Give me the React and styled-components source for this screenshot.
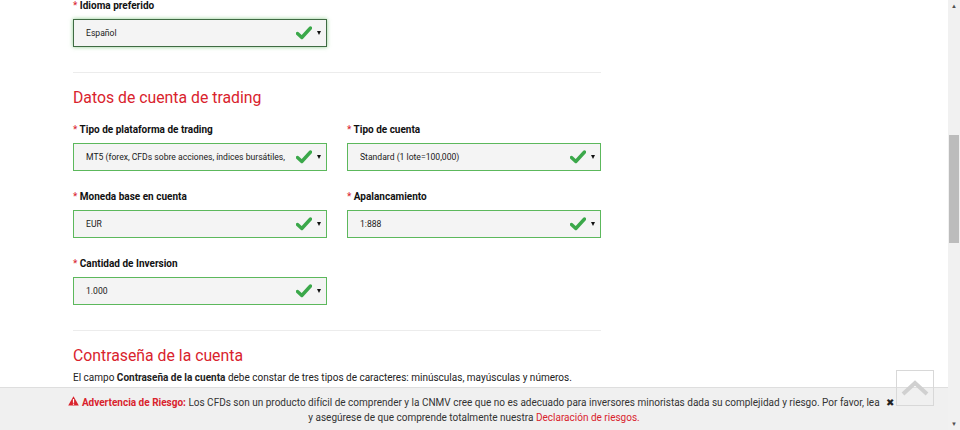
import styled, { createGlobalStyle } from 'styled-components';

const GlobalStyle = createGlobalStyle`
  html, body {
    margin: 0;
    padding: 0;
    background: #fff;
    overflow: hidden;
  }
  body {
    font-family: Roboto, 'Liberation Sans', Arial, sans-serif;
    color: #222;
  }
`;

const CheckIcon = () => (
  <svg width="16" height="14" viewBox="0 0 16 14">
    <path
      d="M1.5 7.5 L5.8 11.5 L14.5 2"
      fill="none"
      stroke="#3ba84a"
      strokeWidth="3.4"
      strokeLinecap="round"
      strokeLinejoin="round"
    />
  </svg>
);

const WarnIcon = () => (
  <svg width="11" height="10" viewBox="0 0 11 10">
    <path d="M5.5 0.3 L10.8 9.6 L0.2 9.6 Z" fill="#d9232d" />
    <rect x="4.9" y="3" width="1.2" height="3.8" fill="#fff" />
    <rect x="4.9" y="7.6" width="1.2" height="1.2" fill="#fff" />
  </svg>
);

const Field = ({ label, value, focused }) => (
  <FieldBlock>
    <Label>
      <Star>*</Star> {label}
    </Label>
    <Select $focused={focused}>
      <SelectValue>{value}</SelectValue>
      <CheckIcon />
      <Caret />
    </Select>
  </FieldBlock>
);

const App = () => (
  <>
    <GlobalStyle />
    <Page>
      <Main>
        <Content>
          <Grid>
            <Field label="Idioma preferido" value="Español" focused />
          </Grid>
          <Divider />
          <Title>Datos de cuenta de trading</Title>
          <Grid>
            <Field
              label="Tipo de plataforma de trading"
              value="MT5 (forex, CFDs sobre acciones, índices bursátiles,"
            />
            <Field label="Tipo de cuenta" value="Standard (1 lote=100,000)" />
            <Field label="Moneda base en cuenta" value="EUR" />
            <Field label="Apalancamiento" value="1:888" />
            <Field label="Cantidad de Inversion" value="1.000" />
          </Grid>
          <Divider />
          <Title>Contraseña de la cuenta</Title>
          <Paragraph>
            El campo <b>Contraseña de la cuenta</b> debe constar de tres tipos
            de caracteres: minúsculas, mayúsculas y números.
          </Paragraph>
        </Content>
        <RiskBar>
          <RiskText>
            <WarnIcon /> <RiskLabel>Advertencia de Riesgo:</RiskLabel> Los
            CFDs son un producto difícil de comprender y la CNMV cree que no es
            adecuado para inversores minoristas dada su complejidad y riesgo.
            Por favor, lea y asegúrese de que comprende totalmente nuestra{' '}
            <RiskLink>Declaración de riesgos.</RiskLink>
          </RiskText>
          <Close>✖</Close>
        </RiskBar>
        <TopButton>
          <svg width="28" height="16" viewBox="0 0 28 16">
            <path
              d="M2 14 L14 3 L26 14"
              fill="none"
              stroke="#d0d0d0"
              strokeWidth="4"
            />
          </svg>
        </TopButton>
      </Main>
      <Scrollbar>
        <ScrollArrow>▲</ScrollArrow>
        <Track>
          <Thumb />
        </Track>
        <ScrollArrow>▼</ScrollArrow>
      </Scrollbar>
    </Page>
  </>
);

export default App;

const Page = styled.div`
  display: flex;
  width: 960px;
  height: 430px;
  overflow: hidden;
`;

const Main = styled.div`
  position: relative;
  flex: 1;
  display: flex;
  flex-direction: column;
  overflow: hidden;
`;

const Content = styled.div`
  flex: 1;
  width: 528px;
  padding-left: 73px;
  overflow: hidden;
`;

const Grid = styled.div`
  display: grid;
  grid-template-columns: 254px 254px;
  column-gap: 20px;
  row-gap: 19px;
  margin-top: -1px;
`;

const FieldBlock = styled.div`
  display: flex;
  flex-direction: column;
  gap: 6px;
`;

const Label = styled.div`
  font-size: 10px;
  line-height: 14px;
  font-weight: 700;
  color: #111;
`;

const Star = styled.span`
  color: #d9232d;
  font-weight: 400;
`;

const Select = styled.div`
  box-sizing: border-box;
  height: 28px;
  display: flex;
  align-items: center;
  gap: 5px;
  padding: 0 5px 0 12px;
  background: #f4f4f4;
  border: 1px solid ${(p) => (p.$focused ? '#3f6b43' : '#5cb85c')};
  box-shadow: ${(p) => (p.$focused ? '0 0 4px rgba(92, 184, 92, 0.7)' : 'none')};
`;

const SelectValue = styled.span`
  flex: 1;
  font-size: 8.6px;
  color: #1a1a1a;
  white-space: nowrap;
  overflow: hidden;
`;

const Caret = styled.span`
  width: 0;
  height: 0;
  border-left: 2.5px solid transparent;
  border-right: 2.5px solid transparent;
  border-top: 4px solid #111;
`;

const Divider = styled.hr`
  border: 0;
  border-top: 1px solid #ececec;
  margin: 25px 0 15px;
`;

const Title = styled.h2`
  margin: 0 0 16px;
  font-size: 15.8px;
  line-height: 20px;
  font-weight: 400;
  color: #d9232d;
`;

const Paragraph = styled.p`
  margin: -11px 0 0;
  font-size: 10px;
  line-height: 14px;
  color: #222;
`;

const RiskBar = styled.div`
  flex: 0 0 43px;
  box-sizing: border-box;
  display: flex;
  align-items: flex-start;
  padding: 7px 0 0 68px;
  background: #f0f0f0;
  border-top: 1px solid #dedede;
`;

const RiskText = styled.div`
  width: 812px;
  text-align: center;
  font-size: 10px;
  line-height: 15px;
  color: #333;
`;

const RiskLabel = styled.b`
  color: #d9232d;
`;

const RiskLink = styled.span`
  color: #d9232d;
`;

const Close = styled.span`
  margin-left: 6px;
  font-size: 10px;
  line-height: 15px;
  color: #222;
`;

const TopButton = styled.div`
  position: absolute;
  left: 896px;
  top: 370px;
  box-sizing: border-box;
  width: 38px;
  height: 36px;
  display: flex;
  align-items: center;
  justify-content: center;
  border: 1px solid #d8d8d8;
  background: transparent;
`;

const Scrollbar = styled.div`
  width: 12px;
  display: flex;
  flex-direction: column;
  background: #f1f1f1;
`;

const ScrollArrow = styled.div`
  height: 12px;
  font-size: 6px;
  line-height: 12px;
  text-align: center;
  color: #505050;
`;

const Track = styled.div`
  flex: 1;
  padding: 123px 1px 0;
`;

const Thumb = styled.div`
  height: 108px;
  background: #bcbcbc;
`;
